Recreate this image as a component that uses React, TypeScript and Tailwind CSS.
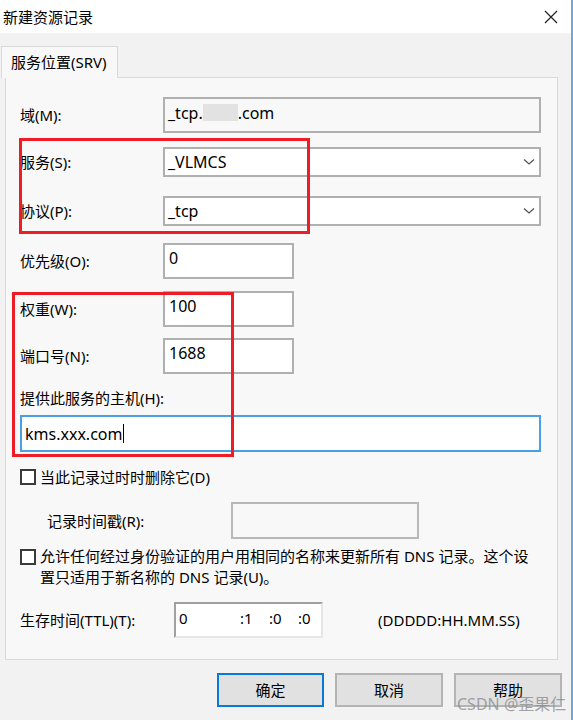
import React from 'react';

const Chevron: React.FC = () => (
    <svg width="12" height="8" viewBox="0 0 12 8" className="shrink-0">
        <polyline points="1,1.5 6,6 11,1.5" fill="none" stroke="#555" strokeWidth="1.3" />
    </svg>
);

const Checkbox: React.FC = () => <div className="w-[16px] h-[16px] border-2 border-[#3a3a3a] bg-white shrink-0" />;

const Label: React.FC<{ children: React.ReactNode }> = ({ children }) => (
    <div className="w-[143px] shrink-0 text-[15px] leading-5">{children}</div>
);

const App: React.FC = () => {
    return (
        <div className="w-[573px] h-[720px] bg-[#f2f2f2] border-r-2 border-[#6aa7e6] relative overflow-hidden text-black font-['Noto_Sans','Noto_Sans_CJK_SC',sans-serif]">
            {/* title bar */}
            <header className="h-[33px] bg-white flex items-center justify-between pl-[3px] pr-[13px]">
                <span className="text-[15px] leading-5">新建资源记录</span>
                <svg width="14" height="14" viewBox="0 0 14 14">
                    <path d="M1 1 L13 13 M13 1 L1 13" stroke="#222" strokeWidth="1.2" />
                </svg>
            </header>

            <div className="pt-[13px]">
                <div className="ml-[1px] w-[117px] h-[32px] -mb-px relative z-10 bg-[#f8f8f8] border border-b-0 border-[#d9d9d9] pl-[9px] flex items-center text-[15px]">
                    服务位置(SRV)
                </div>

                <section className="ml-[5px] w-[553px] h-[583px] bg-[#f8f8f8] border border-[#d9d9d9] pl-[14px] text-[15px]">
                    <div className="mt-[19px] h-[36px] flex items-center">
                        <Label>域(M):</Label>
                        <div className="w-[378px] h-full border-2 border-[#b0b0b0] flex items-start pt-[4px] pl-[3px] text-[16px] leading-5">
                            _tcp.<span className="inline-block w-[35px] h-[17px] bg-[#e2e2e2] mt-[1px]" />.com
                        </div>
                    </div>

                    <div className="mt-[14px] h-[30px] flex items-center">
                        <Label>服务(S):</Label>
                        <div className="w-[378px] h-full border-2 border-[#b0b0b0] bg-white flex items-center justify-between pl-[3px] pr-[4px] text-[16px]">
                            <span>_VLMCS</span>
                            <Chevron />
                        </div>
                    </div>

                    <div className="mt-[19px] h-[30px] flex items-center">
                        <Label>协议(P):</Label>
                        <div className="w-[378px] h-full border-2 border-[#b0b0b0] bg-white flex items-center justify-between pl-[3px] pr-[4px] text-[16px]">
                            <span>_tcp</span>
                            <Chevron />
                        </div>
                    </div>

                    <div className="mt-[17px] h-[36px] flex items-center">
                        <Label>优先级(O):</Label>
                        <div className="w-[131px] h-full border-2 border-[#b0b0b0] bg-white pt-[3px] pl-[4px] text-[16px] leading-5">0</div>
                    </div>

                    <div className="mt-[12px] h-[36px] flex items-center">
                        <Label>权重(W):</Label>
                        <div className="w-[131px] h-full border-2 border-[#b0b0b0] bg-white pt-[3px] pl-[4px] text-[16px] leading-5">100</div>
                    </div>

                    <div className="mt-[11px] h-[36px] flex items-center">
                        <Label>端口号(N):</Label>
                        <div className="w-[131px] h-full border-2 border-[#b0b0b0] bg-white pt-[3px] pl-[4px] text-[16px] leading-5">1688</div>
                    </div>

                    <div className="mt-[14px] leading-5">提供此服务的主机(H):</div>
                    <div className="mt-[7px] w-[521px] h-[37px] border-2 border-[#4b9fe4] bg-white flex items-center pl-[3px] text-[16px]">
                        <span>kms.xxx.com</span>
                        <span className="w-px h-[19px] bg-black ml-px" />
                    </div>

                    <div className="mt-[15px] flex items-center gap-[4px] leading-5">
                        <Checkbox />
                        <span>当此记录过时时删除它(D)</span>
                    </div>

                    <div className="mt-[15px] h-[37px] flex items-center">
                        <span className="ml-[27px] w-[184px] shrink-0 leading-5">记录时间戳(R):</span>
                        <div className="w-[188px] h-full border-2 border-[#b8b8b8] bg-[#f8f8f8]" />
                    </div>

                    <div className="mt-[7px] flex items-start gap-[4px] leading-[21px]">
                        <div className="mt-[3px]"><Checkbox /></div>
                        <p>
                            允许任何经过身份验证的用户用相同的名称来更新所有 DNS 记录。这个设
                            <br />
                            置只适用于新名称的 DNS 记录(U)。
                        </p>
                    </div>

                    <div className="mt-[14px] h-[36px] flex items-center">
                        <span className="w-[154px] shrink-0 leading-5">生存时间(TTL)(T):</span>
                        <div className="w-[149px] h-full bg-white border-2 border-t-[#a0a0a0] border-l-[#a0a0a0] border-r-[#e6e6e6] border-b-[#e6e6e6] relative text-[15px] leading-5">
                            <span className="absolute left-[3px] top-[4px]">0</span>
                            <span className="absolute left-[64px] top-[4px]">:1</span>
                            <span className="absolute left-[93px] top-[4px]">:0</span>
                            <span className="absolute left-[122px] top-[4px]">:0</span>
                        </div>
                        <span className="ml-[55px] leading-5">(DDDDD:HH.MM.SS)</span>
                    </div>
                </section>

                <footer className="mt-[13px] pl-[217px] flex gap-[11px] text-[15px]">
                    <button className="w-[107px] h-[34px] bg-[#e1e1e1] border-2 border-[#0a78d7]">确定</button>
                    <button className="w-[108px] h-[34px] bg-[#e1e1e1] border-2 border-[#b4b4b4]">取消</button>
                    <button className="w-[108px] h-[34px] bg-[#e1e1e1] border-2 border-[#b4b4b4]">帮助</button>
                </footer>
            </div>

            {/* red annotation boxes */}
            <div className="absolute left-[19px] top-[138px] w-[291px] h-[96px] border-[3px] border-[#ee1c25] pointer-events-none" />
            <div className="absolute left-[12px] top-[292px] w-[222px] h-[165px] border-[3px] border-[#ee1c25] pointer-events-none" />

            {/* watermark */}
            <div className="absolute left-[457px] top-[694px] text-[16px] leading-5 text-[#8c8c8c]/80 pointer-events-none">
                CSDN @歪果仁
            </div>
        </div>
    );
};

export default App;
